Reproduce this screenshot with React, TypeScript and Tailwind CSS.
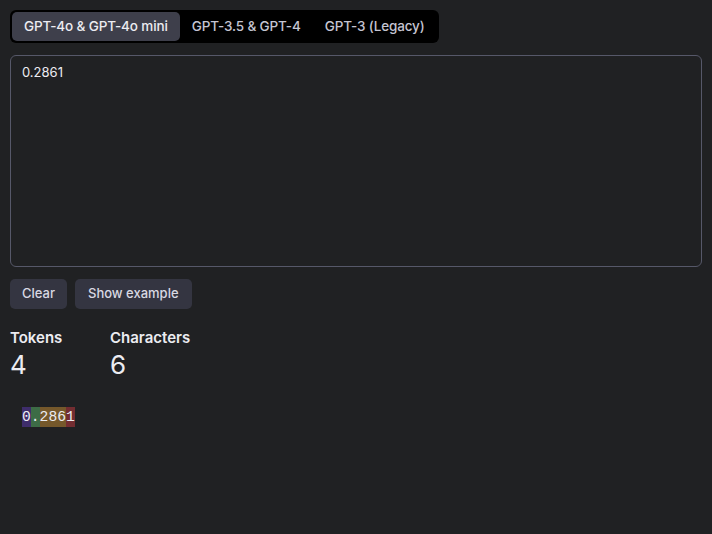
import { useState } from 'react'

const models = ['GPT-4o & GPT-4o mini', 'GPT-3.5 & GPT-4', 'GPT-3 (Legacy)']

const tokens = [
  { text: '0', color: 'bg-[rgba(107,64,216,0.4)]' },
  { text: '.', color: 'bg-[rgba(104,222,122,0.4)]' },
  { text: '286', color: 'bg-[rgba(244,172,54,0.4)]' },
  { text: '1', color: 'bg-[rgba(239,65,70,0.4)]' },
]

export default function App() {
  const [active, setActive] = useState(0)
  const [text, setText] = useState('0.2861')

  return (
    <div
      className="min-h-[534px] bg-[#202123] px-[10px] pt-[10px] text-[#ececf1]"
      style={{ fontFamily: 'Inter, "Noto Sans", sans-serif' }}
    >
      {/* Model tabs */}
      <div className="inline-flex rounded-[6px] bg-black p-[2px]">
        {models.map((m, i) => (
          <button
            key={m}
            onClick={() => setActive(i)}
            className={
              i === active
                ? 'h-[29px] rounded-[5px] bg-[#3e3f4b] px-[12px] text-[13.5px] tracking-[-0.01em] font-medium text-[#ececf1]'
                : 'h-[29px] rounded-[5px] px-[12px] text-[13.5px] tracking-[-0.01em] font-medium text-[#c5c5d2]'
            }
          >
            {m}
          </button>
        ))}
      </div>

      {/* Input */}
      <textarea
        value={text}
        onChange={(e) => setText(e.target.value)}
        className="mt-[12px] block h-[212px] w-full resize-none rounded-[6px] border border-[#565869] bg-[#202123] px-[11px] py-[8px] text-[13px] leading-[16px] text-[#ececf1] outline-none"
      />

      {/* Actions */}
      <div className="mt-[12px] flex gap-[8px]">
        <button className="h-[30px] rounded-[5px] bg-[#343541] px-[12px] text-[13px] font-medium text-[#d9d9e3]">
          Clear
        </button>
        <button className="h-[30px] rounded-[5px] bg-[#343541] px-[13px] text-[13px] font-medium text-[#d9d9e3]">
          Show example
        </button>
      </div>

      {/* Stats */}
      <div className="mt-[20px] flex gap-[49px]">
        <div className="w-[51px]">
          <div className="text-[15px] font-semibold leading-[18px]">Tokens</div>
          <div className="mt-[3px] text-[26px] leading-[30px]">4</div>
        </div>
        <div>
          <div className="text-[15px] font-semibold leading-[18px]">Characters</div>
          <div className="mt-[3px] text-[26px] leading-[30px]">{text.length}</div>
        </div>
      </div>

      {/* Tokenized output */}
      <div
        className="mt-[27px] flex px-[12px] text-[14.67px] text-[#ececf1]"
        style={{ fontFamily: '"Liberation Mono", "DejaVu Sans Mono", monospace' }}
      >
        {tokens.map((t, i) => (
          <span key={i} className={`${t.color} h-[20px] leading-[20px] whitespace-pre`}>
            {t.text}
          </span>
        ))}
      </div>
    </div>
  )
}
